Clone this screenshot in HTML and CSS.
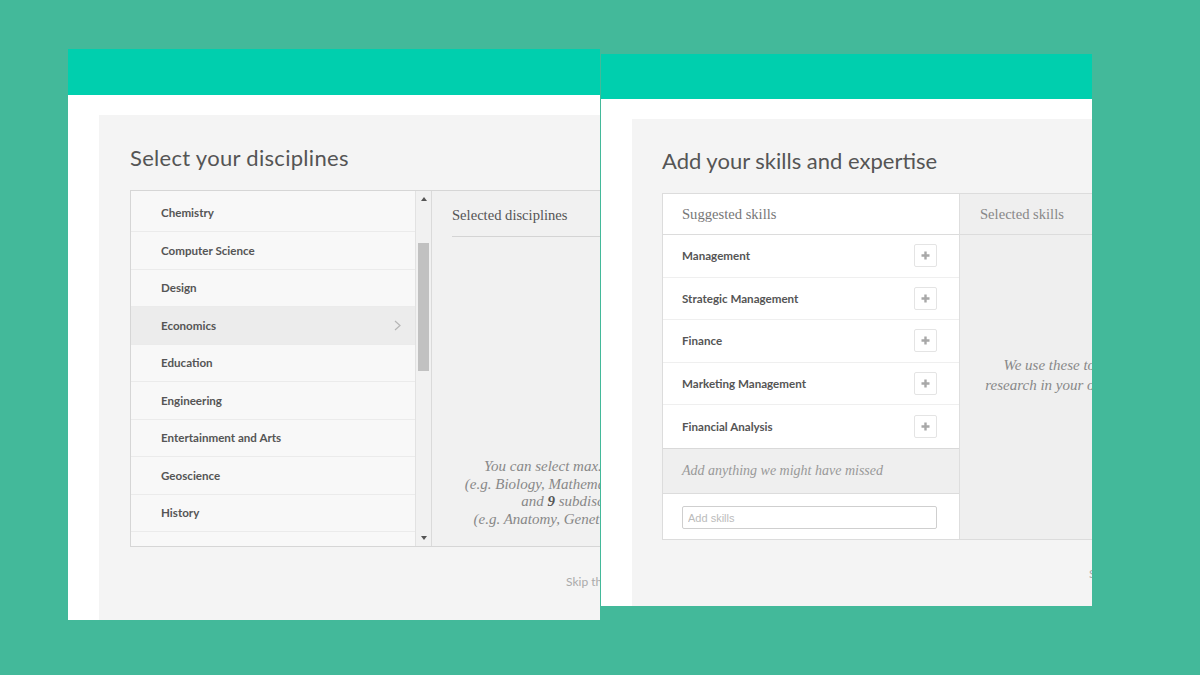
FILE: index.html
```html
<!DOCTYPE html>
<html lang="en">
<head>
  <meta charset="UTF-8">
  <meta name="viewport" content="width=device-width, initial-scale=1.0">
  <title>Onboarding steps</title>
  <link rel="stylesheet" href="styles.css">
</head>
<body>

  <div class="window window-disciplines">
    <div class="window-bar"></div>
    <div class="window-body">
      <section class="panel">
        <h2>Select your disciplines</h2>

        <div class="picker picker-disciplines">
          <div class="discipline-list">
            <ul>
              <li>Chemistry</li>
              <li>Computer Science</li>
              <li>Design</li>
              <li class="active">Economics
                <svg class="chevron" width="7" height="11" viewBox="0 0 7 11"><polyline points="1,1 6,5.5 1,10" fill="none" stroke="#b5b5b5" stroke-width="1.2"/></svg>
              </li>
              <li>Education</li>
              <li>Engineering</li>
              <li>Entertainment and Arts</li>
              <li>Geoscience</li>
              <li>History</li>
            </ul>
            <div class="scrollbar">
              <span class="arrow arrow-up"></span>
              <span class="thumb"></span>
              <span class="arrow arrow-down"></span>
            </div>
          </div>

          <div class="selected">
            <div class="selected-head">Selected disciplines</div>
            <p class="hint hint-disciplines">
              You can select max. 3 disciplines<br>
              (e.g. Biology, Mathematics, Chemistry)<br>
              and <b>9</b> subdisciplines<br>
              (e.g. Anatomy, Genetics, Neurology)
            </p>
          </div>
        </div>

        <div class="panel-foot foot-disciplines"><a href="#">Skip this step</a></div>
      </section>
    </div>
  </div>

  <div class="window window-skills">
    <div class="window-bar"></div>
    <div class="window-body">
      <section class="panel">
        <h2>Add your skills and expertise</h2>

        <div class="picker picker-skills">
          <div class="suggested">
            <div class="suggested-head">Suggested skills</div>
            <ul>
              <li>Management <button type="button" class="add-btn"><svg width="9" height="9" viewBox="0 0 9 9"><path d="M4.5 0.5v8M0.5 4.5h8" stroke="#a8a8a8" stroke-width="2.4"/></svg></button></li>
              <li>Strategic Management <button type="button" class="add-btn"><svg width="9" height="9" viewBox="0 0 9 9"><path d="M4.5 0.5v8M0.5 4.5h8" stroke="#a8a8a8" stroke-width="2.4"/></svg></button></li>
              <li>Finance <button type="button" class="add-btn"><svg width="9" height="9" viewBox="0 0 9 9"><path d="M4.5 0.5v8M0.5 4.5h8" stroke="#a8a8a8" stroke-width="2.4"/></svg></button></li>
              <li>Marketing Management <button type="button" class="add-btn"><svg width="9" height="9" viewBox="0 0 9 9"><path d="M4.5 0.5v8M0.5 4.5h8" stroke="#a8a8a8" stroke-width="2.4"/></svg></button></li>
              <li>Financial Analysis <button type="button" class="add-btn"><svg width="9" height="9" viewBox="0 0 9 9"><path d="M4.5 0.5v8M0.5 4.5h8" stroke="#a8a8a8" stroke-width="2.4"/></svg></button></li>
            </ul>
            <div class="missed">Add anything we might have missed</div>
            <div class="add-row">
              <input type="text" placeholder="Add skills">
            </div>
          </div>

          <div class="selected selected-skills">
            <div class="selected-head">Selected skills</div>
            <p class="hint hint-skills">
              We use these to show you relevant<br>
              research in your own areas of expertise.
            </p>
          </div>
        </div>

        <div class="panel-foot foot-skills"><a href="#">Skip this step</a></div>
      </section>
    </div>
  </div>

</body>
</html>
```

FILE: styles.css
```css
body {
  margin: 0;
  width: 1200px;
  height: 675px;
  position: relative;
  overflow: hidden;
  background-color: #43b99a;
  font-family: Lato, "Liberation Sans", sans-serif;
  color: #555;
}

ul {
  list-style: none;
  margin: 0;
  padding: 0;
}

/* windows sit on the green backdrop like screenshots */
.window {
  position: absolute;
  display: flex;
  flex-direction: column;
  background-color: #fff;
  overflow: hidden;
}

.window-disciplines {
  left: 68px;
  top: 49px;
  width: 532px;
  height: 571px;
}

.window-skills {
  left: 601px;
  top: 54px;
  width: 491px;
  height: 552px;
}

.window-bar {
  flex: none;
  height: 46px;
  background-color: #00cfae;
}

.window-skills .window-bar {
  height: 45px;
}

.window-body {
  flex: 1;
  display: flex;
  padding: 20px 0 0 31px;
}

.panel {
  flex: none;
  width: 700px;
  padding: 29px 30px 0 31px;
  background-color: #f4f4f4;
}

.window-skills .panel {
  padding-top: 28px;
  padding-left: 30px;
}

.panel h2 {
  margin: 0 0 18px;
  font-size: 22px;
  line-height: 28px;
  font-weight: 400;
  color: #555;
}

.window-disciplines .panel h2 {
  letter-spacing: 0.3px;
}

.picker {
  display: flex;
  border: 1px solid #d6d6d6;
  box-sizing: border-box;
}

.picker-disciplines {
  width: 604px;
  height: 357px;
}

.picker-skills {
  width: 590px;
  height: 347px;
  border-color: #dcdcdc;
}

/* discipline list with its fake scrollbar */
.discipline-list {
  flex: none;
  width: 301px;
  display: flex;
  background-color: #f8f8f8;
}

.discipline-list ul {
  flex: 1;
  padding-top: 3.5px;
  overflow: hidden;
}

.discipline-list li {
  height: 37.5px;
  box-sizing: border-box;
  display: flex;
  align-items: center;
  justify-content: space-between;
  padding: 0 14px 0 30px;
  border-bottom: 1px solid #ebebeb;
  font-size: 11.6px;
  font-weight: 700;
  color: #555;
}

.discipline-list li.active {
  background-color: #ececec;
}

.scrollbar {
  flex: none;
  width: 15px;
  display: flex;
  flex-direction: column;
  align-items: center;
  background-color: #f1f1f1;
  border-left: 1px solid #e2e2e2;
  border-right: 1px solid #dadada;
}

.arrow {
  width: 0;
  height: 0;
  border-left: 3px solid transparent;
  border-right: 3px solid transparent;
}

.arrow-up {
  margin-top: 6px;
  border-bottom: 4px solid #555;
}

.arrow-down {
  margin-top: auto;
  margin-bottom: 6px;
  border-top: 4px solid #555;
}

.thumb {
  width: 11px;
  height: 128px;
  margin-top: 42px;
  background-color: #c1c1c1;
}

/* right hand "selected" columns */
.selected {
  flex: 1;
  display: flex;
  flex-direction: column;
  padding: 0 20px;
  background-color: #f1f1f1;
}

.selected-head {
  height: 46px;
  box-sizing: border-box;
  padding-top: 14px;
  border-bottom: 1px solid #d4d4d4;
  font-family: "Liberation Serif", serif;
  font-size: 14.6px;
  line-height: 20px;
  color: #555;
}

.hint {
  margin: 0;
  text-align: center;
  font-family: "Liberation Serif", serif;
  font-style: italic;
  font-size: 15px;
  line-height: 17.5px;
  color: #888;
  white-space: nowrap;
}

.hint b {
  color: #555;
}

.hint-disciplines {
  margin-top: auto;
  margin-bottom: 18px;
}

.selected-skills {
  padding: 0;
  background-color: #efefef;
}

.selected-skills .selected-head {
  height: 41px;
  padding: 10px 20px 0;
  border-bottom-color: #dcdcdc;
  color: #888;
}

.hint-skills {
  margin-top: 120px;
  line-height: 20px;
}

/* suggested skills column */
.suggested {
  flex: none;
  width: 296px;
  display: flex;
  flex-direction: column;
  background-color: #fff;
  border-right: 1px solid #dedede;
}

.suggested-head {
  height: 41px;
  box-sizing: border-box;
  padding: 10px 19px 0;
  border-bottom: 1px solid #dcdcdc;
  font-family: "Liberation Serif", serif;
  font-size: 14.6px;
  line-height: 20px;
  color: #777;
}

.suggested li {
  height: 42.5px;
  box-sizing: border-box;
  display: flex;
  align-items: center;
  justify-content: space-between;
  padding: 0 22px 0 19px;
  border-bottom: 1px solid #efefef;
  font-size: 11.6px;
  font-weight: 700;
  color: #555;
}

.suggested li:last-child {
  border-bottom: none;
}

.add-btn {
  width: 23px;
  height: 23px;
  padding: 0;
  display: flex;
  align-items: center;
  justify-content: center;
  background-color: #fff;
  border: 1px solid #e4e4e4;
  border-radius: 2px;
}

.missed {
  height: 46px;
  box-sizing: border-box;
  padding: 0 19px;
  display: flex;
  align-items: center;
  background-color: #efefef;
  border-top: 1px solid #d9d9d9;
  border-bottom: 1px solid #dcdcdc;
  font-family: "Liberation Serif", serif;
  font-style: italic;
  font-size: 14px;
  color: #999;
}

.add-row {
  flex: 1;
  padding: 12px 19px 0;
}

.add-row input {
  width: 255px;
  height: 23px;
  box-sizing: border-box;
  padding: 0 5px;
  border: 1px solid #cfcfcf;
  border-radius: 2px;
  font-family: "Liberation Sans", Arial, sans-serif;
  font-size: 11px;
  color: #555;
}

.add-row input::placeholder {
  color: #bbb;
}

/* skip links under the pickers */
.panel-foot {
  font-size: 12px;
  line-height: 16px;
}

.panel-foot a {
  color: #aaa;
  text-decoration: none;
}

.foot-disciplines {
  margin: 27px 0 0 436px;
}

.foot-skills {
  margin: 26px 0 0 427px;
}
```
